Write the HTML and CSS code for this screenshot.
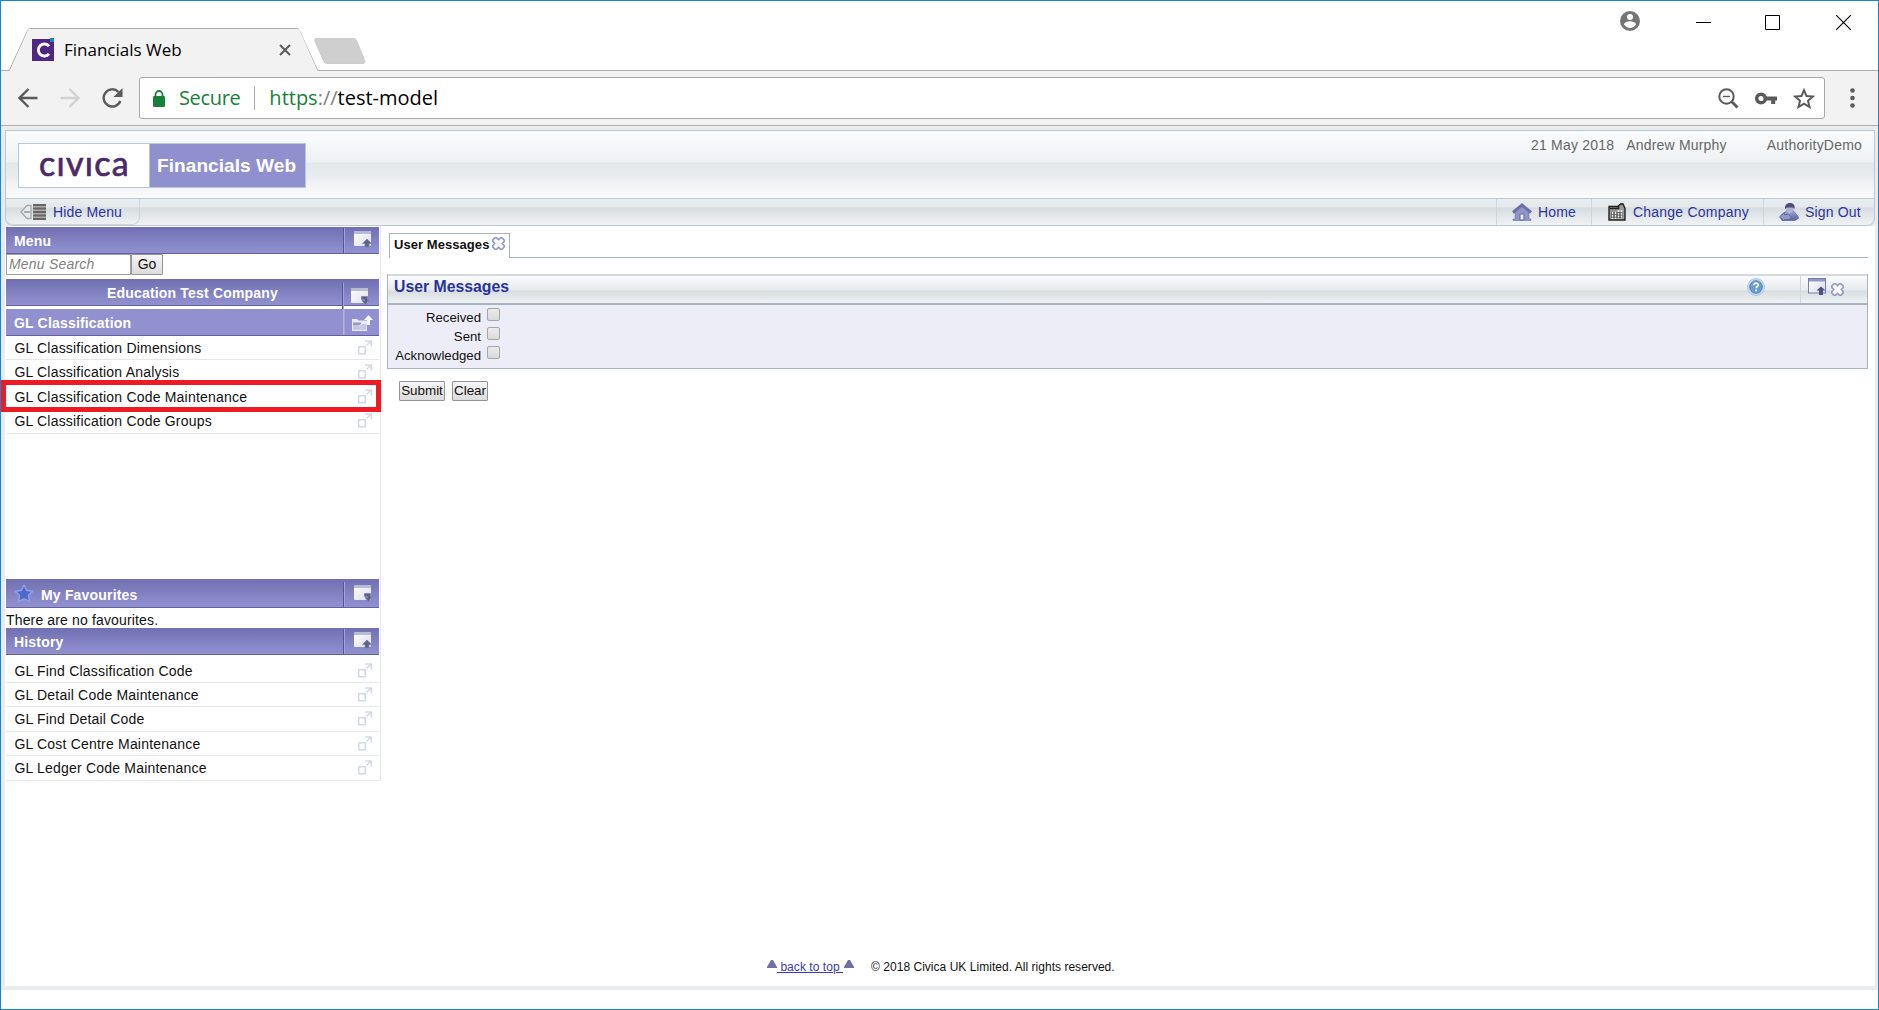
FILE: index.html
```html
<!DOCTYPE html>
<html lang="en">
	<head>
		<meta charset="utf-8">
		<title>Financials Web</title>
		<link rel="stylesheet" href="styles.css">
	</head>
	<body>
		<!-- shared icons -->
		<svg class="defs" width="0" height="0">
			<defs>
				<linearGradient id="pane" x1="0" y1="0" x2="1" y2="1">
					<stop offset="0" stop-color="#fff"/>
					<stop offset="1" stop-color="#dcdcea"/>
				</linearGradient>
				<linearGradient id="blue" x1="0" y1="0" x2="0" y2="1">
					<stop offset="0" stop-color="#9a9fd0"/>
					<stop offset="1" stop-color="#5a5f9c"/>
				</linearGradient>
				<symbol id="win-up" viewBox="0 0 18 17">
					<rect x="0" y="0" width="17" height="15" rx="1" fill="url(#pane)"/>
					<rect x="0" y="0" width="17" height="3" fill="#b9bad3"/>
					<path d="M13 8l4.500 4.500H15V16h-4v-3.500H8.500z" fill="#5d628c" stroke="#7d81ad" stroke-width=".8"/>
				</symbol>
				<symbol id="win-down" viewBox="0 0 18 17">
					<rect x="0" y="0" width="17" height="15" rx="1" fill="url(#pane)"/>
					<rect x="0" y="0" width="17" height="3" fill="#b9bad3"/>
					<path d="M10.500 8.500h6V12H18l-3.500 4.500-3.500-4h2.500v-1h-3z" fill="#5d628c" stroke="#7d81ad" stroke-width=".8"/>
				</symbol>
				<symbol id="popout" viewBox="0 0 14 15">
					<rect x=".75" y="6.750" width="6.500" height="7" fill="none" stroke="#d3dae6" stroke-width="1.500"/>
					<path d="M8.500 5.500l4-4M7 1h6.250v5.500" fill="none" stroke="#d3dae6" stroke-width="1.500"/>
				</symbol>
				<symbol id="cross" viewBox="0 0 13 13">
					<path d="M3 .8h1.500l2 2 2-2H10L12.200 3v1.500l-2 2 2 2V10L10 12.200H8.500l-2-2-2 2H3L.8 10V8.500l2-2-2-2V3z" fill="#fafaff" stroke="#9096c6" stroke-width="1.600" stroke-linejoin="round"/>
				</symbol>
			</defs>
		</svg>

		<div class="window">
			<div class="tabstrip">
				<svg class="tabs" width="380" height="70" viewBox="0 0 380 70">
					<path d="M0 69.500h6c2 0 3-1 3.500-2.500L26.500 29.500c.8-1.500 1.500-2 3-2h266c1.500 0 2.500.5 3 2L315.500 67c.6 1.500 1.500 2.500 3.500 2.500h61" fill="#f2f2f2" stroke="#acacac"/>
					<path d="M9 70L27 29c1-1 1-1 2.500-1h266c1.500 0 2 0 3 1l18 41z" fill="#f2f2f2"/>
					<path d="M315 37.500h37.500c1.500 0 2.300.4 3 2l8.200 20c.6 1.700 0 3-1.700 3h-35.500c-2 0-3-.5-3.700-2l-8.800-20c-.6-1.500-.5-3 1-3z" fill="#cfcfcf" stroke="#c6c6c6" stroke-width=".8"/>
				</svg>
				<div class="tab">
					<svg width="23" height="23" viewBox="0 0 23 23">
						<path d="M0 1h22v22H0z" fill="#4f2683"/>
						<path d="M18 0h4v4h-4z" fill="#1b7fcc"/>
						<path d="M17 8.200a6 6 0 1 0 0 7.600" fill="none" stroke="#fff" stroke-width="2.800"/>
					</svg>
					<span class="tab-title">Financials Web</span>
					<svg class="tab-close" width="12" height="12" viewBox="0 0 12 12"><path d="M1 1l10 10M11 1L1 11" stroke="#5a5a5a" stroke-width="2"/></svg>
				</div>
				<div class="controls">
					<svg width="20" height="20" viewBox="0 0 20 20">
						<circle cx="10" cy="10" r="10" fill="#757575"/>
						<circle cx="10" cy="6" r="3" fill="#fff"/>
						<path d="M4 13.500c0-2 4-3.200 6-3.200s6 1.200 6 3.200c-1.300 2-3.500 3.400-6 3.400s-4.700-1.400-6-3.400z" fill="#fff"/>
					</svg>
					<svg class="min" width="15" height="15" viewBox="0 0 15 15"><path d="M0 7.500h15" stroke="#000"/></svg>
					<svg class="max" width="15" height="15" viewBox="0 0 15 15"><path d="M.5.5h14v14H.5z" fill="none" stroke="#000"/></svg>
					<svg class="shut" width="15" height="15" viewBox="0 0 15 15"><path d="M0 0l15 15M15 0L0 15" stroke="#000" stroke-width="1.100"/></svg>
				</div>
			</div>

			<div class="toolbar">
				<svg width="20" height="20" viewBox="0 0 20 20"><path d="M19.500 10H2M10.500 1L1.500 10l9 9" fill="none" stroke="#5a5a5a" stroke-width="2.300"/></svg>
				<svg width="20" height="20" viewBox="0 0 20 20"><path d="M.5 10H18M9.500 1l9 9-9 9" fill="none" stroke="#d2d2d2" stroke-width="2.300"/></svg>
				<svg width="22" height="20" viewBox="0 0 22 20">
					<path d="M16.500 4A8.600 8.600 0 1 0 18.300 13" fill="none" stroke="#5a5a5a" stroke-width="2.400"/>
					<path d="M20.500 0v9h-9z" fill="#5a5a5a"/>
				</svg>
				<div class="omnibox">
					<svg width="12" height="17" viewBox="0 0 12 17">
						<rect x="0" y="6" width="12" height="11" rx="1.200" fill="#188038"/>
						<path d="M2.500 7V4.500a3.500 3.500 0 0 1 7 0V7" fill="none" stroke="#188038" stroke-width="1.800"/>
					</svg>
					<span class="secure">Secure</span>
					<span class="url"><span class="scheme">https</span><span class="slashes">://</span>test-model</span>
					<div class="omni-icons">
						<svg width="21" height="21" viewBox="0 0 21 21">
							<circle cx="8.500" cy="8.500" r="7.200" fill="none" stroke="#5a5a5a" stroke-width="2"/>
							<path d="M5 8.500h7" stroke="#5a5a5a" stroke-width="1.400"/>
							<path d="M13.500 13.500l6 6" stroke="#5a5a5a" stroke-width="2.800"/>
						</svg>
						<svg width="22" height="13" viewBox="0 0 22 13">
							<circle cx="6" cy="6.500" r="4.300" fill="none" stroke="#5a5a5a" stroke-width="3.500"/>
							<path d="M11 4.500h11v4h-1.800v3.500h-4V8.500H11z" fill="#5a5a5a"/>
						</svg>
						<svg width="22" height="21" viewBox="0 0 22 21"><path d="M11 2.200l2.500 5.900 6.300.5-4.800 4.200 1.500 6.200-5.500-3.400L5.500 19 7 12.800 2.200 8.600l6.300-.5z" fill="none" stroke="#5a5a5a" stroke-width="2"/></svg>
					</div>
				</div>
				<svg class="dots" width="5" height="20" viewBox="0 0 5 20">
					<circle cx="2.500" cy="2.500" r="2.300" fill="#5a5a5a"/>
					<circle cx="2.500" cy="10" r="2.300" fill="#5a5a5a"/>
					<circle cx="2.500" cy="17.500" r="2.300" fill="#5a5a5a"/>
				</svg>
			</div>

			<div class="page">
				<div class="header">
					<div class="logo">
						<div class="logo-name">cıvıca</div>
						<div class="logo-app">Financials Web</div>
					</div>
					<div class="user-info">
						<span class="date">21 May 2018</span>
						<span class="user">Andrew Murphy</span>
						<span>AuthorityDemo</span>
					</div>
				</div>
				<div class="nav">
					<a class="hide-menu">
						<svg width="26" height="16" viewBox="0 0 26 16">
							<path d="M1 8l6-6.500h4v13H7z" fill="#e8ebed" stroke="#a3a7aa" stroke-width="1.300"/>
							<path d="M4 8h6" stroke="#888" stroke-width="1.300"/>
							<path d="M13 .5h13v15H13z" fill="#aaa"/>
							<path d="M13 1h13M13 4.500h13M13 8h13M13 11.500h13M13 15h13" stroke="#666" stroke-width="1.800"/>
						</svg>
						Hide Menu
					</a>
					<a class="nav-item home">
						<svg width="20" height="18" viewBox="0 0 20 18">
							<path d="M3 9l7-6 7 6v7h2v1.500H1V16h2z" fill="#8f95c4" stroke="#6d73a6" stroke-width=".6"/>
							<path d="M1 9.500L10 2l9 7.500" fill="none" stroke="#6a70a6" stroke-width="3"/>
							<path d="M8 17v-6h4v6z" fill="#e4e8f2" stroke="#656b9e"/>
						</svg>
						Home
					</a>
					<a class="nav-item company">
						<svg width="18" height="18" viewBox="0 0 18 18">
							<path d="M1 3.500h8.500L13 .8l2 .2 2 4.500V17H1z" fill="#9a9a9a" stroke="#222" stroke-width="1.400"/>
							<path d="M1.700 5.500h8.800V3" fill="none" stroke="#222" stroke-width="1.400"/>
							<path d="M3 9h11.500v6H3z" fill="#555"/>
							<path d="M4.500 9v7M7.500 9v7M10.500 7v9M13.500 7v9" stroke="#f0f0f0" stroke-width="1.500" stroke-dasharray="2 .8"/>
						</svg>
						Change Company
					</a>
					<a class="nav-item signout">
						<svg width="20" height="18" viewBox="0 0 20 18">
							<path d="M3 11l4-2.500h8l3 3.500 2 3-4 2.500H3L1 14z" fill="url(#blue)" stroke="#565b8d" stroke-width=".6"/>
							<path d="M7 4h8l-.5 4-3 2.500h-2L7 8z" fill="#aeb2d6"/>
							<path d="M6 6c-.5-4 2-6 5-6s5.500 2 4.500 6L14 4.500H8z" fill="#4a4e78"/>
							<path d="M.5 14l5-4.500v2.500l4-1 3 4-3 1.500h-4V18z" fill="#9298c8" stroke="#565b8d" stroke-width=".6"/>
						</svg>
						Sign Out
					</a>
				</div>

				<div class="content">
					<div class="sidebar">
						<div class="bar"><span>Menu</span><span class="bar-icon"><svg width="18" height="17"><use href="#win-up"/></svg></span></div>
						<div class="search">
							<input class="search-box" type="text" placeholder="Menu Search">
							<button class="btn go">Go</button>
						</div>
						<div class="bar"><span class="company-name">Education Test Company</span><span class="bar-icon low"><svg width="18" height="17"><use href="#win-down"/></svg></span></div>
						<div class="bar flat"><span>GL Classification</span><span class="bar-icon">
							<svg class="folder" width="21" height="17" viewBox="0 0 21 17">
								<path d="M0 4h5l1.500 1.500H15V16H0z" fill="#e9e9f3"/>
								<path d="M1 7.500h8V9l-2 1.500H1z" fill="#9798c4"/>
								<path d="M1 15V11h7l2-2h4.500v6z" fill="#c9cae2"/>
								<path d="M16.500 0l4.500 5h-3v5h-3V5h-3z" fill="#f6f6fc"/>
							</svg>
						</span></div>
						<ul class="links gl">
							<li>GL Classification Dimensions<svg width="14" height="15"><use href="#popout"/></svg></li>
							<li>GL Classification Analysis<svg width="14" height="15"><use href="#popout"/></svg></li>
							<li class="marked">GL Classification Code Maintenance<svg width="14" height="15"><use href="#popout"/></svg></li>
							<li>GL Classification Code Groups<svg width="14" height="15"><use href="#popout"/></svg></li>
						</ul>
						<div class="bar fav-bar">
							<svg class="star" width="20" height="19" viewBox="0 0 20 19"><path d="M10 1l2.800 5.400 6 .8-4.300 4.200 1 6L10 15l-5.500 2.500 1-6L1.200 7.200l6-.8z" fill="#5068cc" stroke="#8fa2e6" stroke-width="1.500" stroke-linejoin="round"/></svg>
							<span>My Favourites</span><span class="bar-icon"><svg width="18" height="17"><use href="#win-down"/></svg></span>
						</div>
						<div class="no-favs">There are no favourites.</div>
						<div class="bar"><span>History</span><span class="bar-icon"><svg width="18" height="17"><use href="#win-up"/></svg></span></div>
						<ul class="links history">
							<li>GL Find Classification Code<svg width="14" height="15"><use href="#popout"/></svg></li>
							<li>GL Detail Code Maintenance<svg width="14" height="15"><use href="#popout"/></svg></li>
							<li>GL Find Detail Code<svg width="14" height="15"><use href="#popout"/></svg></li>
							<li>GL Cost Centre Maintenance<svg width="14" height="15"><use href="#popout"/></svg></li>
							<li>GL Ledger Code Maintenance<svg width="14" height="15"><use href="#popout"/></svg></li>
						</ul>
					</div>

					<div class="main">
						<div class="page-tabs">
							<div class="page-tab">User Messages<svg width="13" height="13"><use href="#cross"/></svg></div>
							<div class="page-tabs-rest"></div>
						</div>
						<div class="panel">
							<div class="panel-head">
								<span class="panel-title">User Messages</span>
								<svg class="help" width="18" height="18" viewBox="0 0 18 18">
									<circle cx="9" cy="9" r="8.500" fill="#c3d9ee" stroke="#afcbe6"/>
									<circle cx="9" cy="9" r="6.300" fill="#6c9ccd" stroke="#4a7fb8" stroke-width=".8"/>
									<path d="M6.800 7.200c0-3 4.600-2.800 4.400 0-.1 1.400-2.100 1.600-2.100 3M9.100 11.500v1.700" fill="none" stroke="#fff" stroke-width="1.600"/>
								</svg>
								<div class="panel-tools">
									<svg width="18" height="17" viewBox="0 0 18 17">
										<rect x=".5" y=".5" width="17" height="14.500" fill="url(#pane)" stroke="#777cb0"/>
										<path d="M1 1h16v2.500H1z" fill="#9297c8"/>
										<path d="M13 8.500l4.500 4H15V17h-4v-4.500H8.500z" fill="#4e5180"/>
									</svg>
									<svg class="panel-x" width="13" height="13"><use href="#cross"/></svg>
								</div>
							</div>
							<div class="panel-body">
								<label class="check"><span>Received</span><i class="box"></i></label>
								<label class="check"><span>Sent</span><i class="box"></i></label>
								<label class="check"><span>Acknowledged</span><i class="box"></i></label>
							</div>
						</div>
						<div class="actions">
							<button class="btn submit">Submit</button>
							<button class="btn clear">Clear</button>
						</div>
					</div>
				</div>

				<div class="footer">
					<svg width="10" height="8" viewBox="0 0 10 8"><path d="M4 0h2l4 7v1H0V7z" fill="#6f6fa2"/></svg>
					<a class="top-link">&nbsp;back to top&nbsp;</a>
					<svg class="tri" width="10" height="8" viewBox="0 0 10 8"><path d="M4 0h2l4 7v1H0V7z" fill="#6f6fa2"/></svg>
					<span class="copyright">© 2018 Civica UK Limited. All rights reserved.</span>
				</div>
			</div>
		</div>
	</body>
</html>
```
FILE: styles.css
```css
*,
*::after {
	box-sizing: border-box;
}
body {
	margin: 0;
	font-family: "Liberation Sans", Arial, sans-serif;
	font-size: 14px;
	color: #111;
	background: #fff;
}
svg {
	display: block;
	flex: none;
}
.defs {
	position: absolute;
}
.window {
	width: 1879px;
	height: 1010px;
	border: 1px solid #1883d7;
	overflow: hidden;
}

/* browser frame */
.tabstrip {
	display: flex;
	justify-content: space-between;
	height: 70px;
	position: relative;
	border-bottom: 1px solid #acacac;
}
.tabs {
	position: absolute;
	left: 0;
	top: 0;
}
.tab {
	position: relative;
	display: flex;
	width: 319px;
	padding: 37px 29px 0 31px;
}
.tab-title {
	margin-left: 9px;
	font: 17px/24px "Open Sans", sans-serif;
	letter-spacing: 0;
	color: #000;
	white-space: nowrap;
}
.tab-close {
	margin: 6px 0 0 auto;
}
.controls {
	display: flex;
	padding: 10px 27px 0 0;
}
.controls .min {
	margin: 4px 0 0 56px;
}
.controls .max {
	margin: 4px 0 0 54px;
}
.controls .shut {
	margin: 4px 0 0 56px;
}
.toolbar {
	display: flex;
	align-items: center;
	gap: 22px;
	height: 55px;
	padding: 0 23px 0 17px;
	background: #f2f2f2;
	border-bottom: 1px solid #b0b0b0;
}
.omnibox {
	display: flex;
	align-items: center;
	flex: 1;
	height: 42px;
	margin-left: -7px;
	padding: 0 9px 0 13px;
	background: #fff;
	border: 1px solid #a9a9a9;
	border-radius: 3px;
	font: 20px/28px "Open Sans", sans-serif;
	color: #000;
}
.secure {
	margin-left: 14px;
	padding-right: 14px;
	line-height: 24px;
	letter-spacing: -0.350px;
	border-right: 1px solid #a9a9a9;
	color: #188038;
}
.url {
	margin-left: 14px;
}
.scheme {
	color: #188038;
}
.slashes {
	color: #808080;
}
.omni-icons {
	display: flex;
	align-items: center;
	gap: 16px;
	margin-left: auto;
}
.dots {
	margin-left: 3px;
}

/* application page */
.page {
	height: 864px;
	padding: 4px 3px 4px 4px;
	background: #e8ecef;
	display: flex;
	flex-direction: column;
}
.header {
	display: flex;
	justify-content: space-between;
	height: 69px;
	border: 1px solid #bccad3;
	background: linear-gradient(#fafcfd 0, #eef1f4 31px, #e3e8eb 32px, #e8ebee 42px, #fafbfc 66px);
}
.logo {
	display: flex;
	width: 288px;
	height: 45px;
	margin: 12px 0 0 12px;
	border: 1px solid #b8c8d4;
}
.logo-name {
	width: 131px;
	background: #fff;
	border-right: 1px solid #b8c8d4;
	font: 34px/37px Lato, sans-serif;
	letter-spacing: 1.300px;
	padding-left: 20px;
	color: #4a2a6c;
	-webkit-text-stroke: 0.700px #4a2a6c;
}
.logo-app {
	flex: 1;
	padding-left: 7px;
	background: #9190cf;
	color: #fff;
	font-size: 19px;
	font-weight: bold;
	line-height: 43px;
	letter-spacing: 0.080px;
	white-space: nowrap;
}
.user-info {
	display: flex;
	padding: 6px 12px 0 0;
	line-height: 17px;
	letter-spacing: 0.200px;
	color: #666;
}
.date {
	margin-right: 12px;
}
.user {
	margin-right: 40px;
}
.nav {
	display: flex;
	height: 27px;
	border: 1px solid #bccad3;
	border-top: 0;
	border-radius: 0 0 8px 8px;
	background: linear-gradient(#e9edf0 0, #e4e8eb 8px, #d6dce0 9px, #dde2e5 13px, #f0f3f5 26px);
	color: #2b349a;
	line-height: 26px;
	letter-spacing: 0.150px;
}
.nav a {
	display: flex;
	align-items: center;
	gap: 7px;
}
.nav .hide-menu {
	width: 134px;
	padding-left: 14px;
	border-right: 1px solid #cdd6dc;
	border-bottom: 1px solid #cdd6dc;
	border-radius: 0 0 8px 8px;
	margin-right: auto;
}
.nav-item {
	border-left: 1px solid #cdd6dc;
	padding-left: 15px;
}
.nav .home,
.nav .signout {
	gap: 6px;
}
.home {
	width: 95px;
}
.company {
	width: 172px;
	padding-left: 16px;
	letter-spacing: 0.220px;
}
.signout {
	width: 111px;
}
.content {
	display: flex;
	flex: 1;
	background: #fff;
	padding-left: 1px;
}

/* left menu */
.sidebar {
	width: 375px;
	height: 555px;
	padding: 1px 1px 0 0;
	border-right: 1px solid #e6e9ec;
}
.bar {
	display: flex;
	height: 27px;
	padding-left: 8px;
	background: linear-gradient(#7070b2, #9291d0);
	border-bottom: 1px solid #63609f;
	color: #fff;
	font-weight: bold;
	line-height: 28px;
	letter-spacing: 0.180px;
}
.bar-icon {
	width: 36px;
	margin: 1px 0 0 auto;
	padding: 3px 0 0 10px;
	border-left: 1px solid #56549a;
	box-shadow: inset 1px 0 #a3a2dc;
}
.flat {
	background: #9291d0;
	margin-top: 3px;
}
.flat .bar-icon {
	margin-top: 0;
	border-left-color: #b4b3e0;
	padding: 6px 0 0 8px;
}
.bar .low {
	width: 37px;
	margin-top: 4px;
	margin-bottom: -4px;
	padding: 5px 0 0 8px;
}
.search {
	display: flex;
	height: 25px;
}
.search-box {
	width: 125px;
	height: 21px;
	padding: 0 2px 1px;
	border: 1px solid #a0a0a0;
	font: 14px "Liberation Sans", Arial, sans-serif;
	letter-spacing: 0.200px;
}
.search-box::placeholder {
	font-style: italic;
	color: #808080;
}
.btn {
	height: 20px;
	padding: 0 0 1px;
	border: 1px solid #949494;
	border-radius: 1px;
	background: linear-gradient(#f6f6f6, #dcdcdc);
	color: #111;
	font: 13.400px "Liberation Sans", Arial, sans-serif;
}
.go {
	width: 32px;
	height: 21px;
	font-size: 14px;
}
.company-name {
	margin-left: 93px;
}
.links {
	list-style: none;
	margin: 0;
	padding: 0;
}
.links li {
	display: flex;
	justify-content: space-between;
	height: 24.400px;
	padding: 0 7px 0 8.400px;
	border-bottom: 1px solid #e6e6e6;
	line-height: 25px;
	letter-spacing: 0.200px;
	white-space: nowrap;
}
.links svg {
	margin-top: 4px;
}
.gl {
	height: 243px;
}
.marked {
	position: relative;
}
.marked::after {
	content: "";
	position: absolute;
	left: -5px;
	top: -5px;
	width: 380px;
	height: 32px;
	border: 5px solid #ed1c24;
}
.bar.fav-bar {
	height: 29px;
	padding-left: 8px;
	line-height: 32px;
}
.fav-bar .star {
	margin: 5px 7px 0 0;
}
.fav-bar .bar-icon {
	margin-top: 3px;
}
.no-favs {
	height: 20px;
	line-height: 25px;
	letter-spacing: 0.150px;
}
.history {
	padding-top: 3.600px;
}

/* main area */
.main {
	flex: 1;
	padding: 7px 7px 0 6px;
}
.page-tabs {
	display: flex;
	height: 25px;
	padding-left: 2px;
}
.page-tab {
	display: flex;
	width: 121px;
	padding-left: 4px;
	border: 1px solid #a8b5c0;
	border-bottom: 0;
	font-size: 13px;
	font-weight: bold;
	line-height: 22px;
	letter-spacing: 0.060px;
	white-space: nowrap;
}
.page-tab svg {
	margin: 3px 0 0 3px;
}
.page-tabs-rest {
	flex: 1;
	border-bottom: 1px solid #a8b5c0;
}
.panel {
	margin-top: 16px;
	border: 1px solid #a8b5c0;
	border-top: 0;
	height: 95px;
}
.panel-head {
	display: flex;
	height: 31px;
	border-top: 2px solid #d5dade;
	border-bottom: 2px solid #a8b5c0;
	background: linear-gradient(#fafbfc 0, #e7ebed 14px, #d7dde0 15px, #f0f2f4 27px);
}
.panel-title {
	padding-left: 6px;
	font-size: 15.800px;
	font-weight: bold;
	line-height: 22px;
	color: #29339b;
}
.help {
	margin: 2px 35px 0 auto;
}
.panel-tools {
	display: flex;
	width: 67px;
	padding: 2px 0 0 7px;
	border-left: 1px solid #d0d6da;
}
.panel-x {
	margin: 5px 0 0 5px;
}
.panel-body {
	height: 63px;
	padding-top: 3px;
	background: #ededf7;
}
.check {
	display: flex;
	height: 19px;
}
.check span {
	width: 93px;
	text-align: right;
	font-size: 13.200px;
	line-height: 20px;
}
.box {
	width: 13px;
	height: 13px;
	margin-left: 6px;
	border: 1px solid #a6a6a6;
	border-radius: 2px;
	background: linear-gradient(#ebebeb, #dadada);
}
.actions {
	display: flex;
	gap: 7px;
	padding: 12px 0 0 12px;
}
.submit {
	width: 46px;
}
.clear {
	width: 36px;
}
.footer {
	display: flex;
	height: 30px;
	padding: 2px 0 0 762px;
	background: #fff;
	font-size: 12px;
	line-height: 18px;
}
.footer svg {
	margin-top: 2px;
}
.footer .tri {
	margin-left: 1px;
}
.top-link {
	color: #3a3ab0;
	text-decoration: underline;
	letter-spacing: 0.050px;
}
.copyright {
	margin-left: 17px;
	letter-spacing: 0.030px;
}
```
